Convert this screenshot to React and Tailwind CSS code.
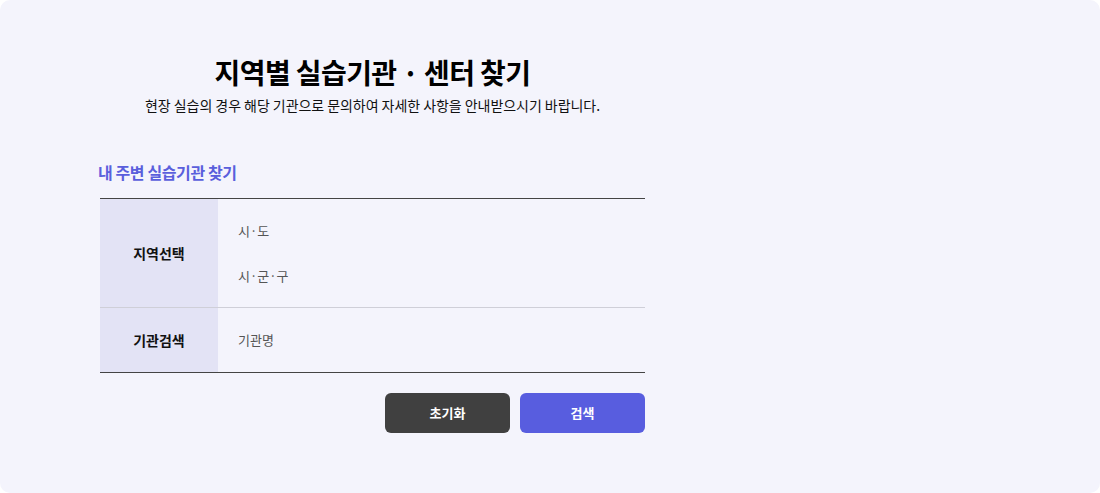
import React from 'react';

const font = { fontFamily: '"Noto Sans CJK KR", "Noto Sans", sans-serif' };

const App = () => {
  return (
    <div className="w-[1100px] h-[493px] bg-white" style={font}>
      <div className="w-full h-full bg-[#f4f4fc] rounded-[10px] pt-[52px] pl-[100px]">
        <div className="w-[545px]">
          {/* Title */}
          <div className="flex flex-col items-center">
            <h1 className="text-[28px] leading-[40px] font-bold text-black tracking-[-0.6px]">
              지역별 실습기관 · 센터 찾기
            </h1>
            <p className="text-[14px] leading-[20px] text-[#111] tracking-[-0.05px] mt-[3px] whitespace-nowrap">
              현장 실습의 경우 해당 기관으로 문의하여 자세한 사항을 안내받으시기 바랍니다.
            </p>
          </div>

          {/* Nearby search */}
          <h2 className="mt-[45px] -ml-[2px] text-[16px] leading-[24px] font-bold text-[#5a5fdc] tracking-[-0.4px]">
            내 주변 실습기관 찾기
          </h2>

          <div className="mt-[14px] border-t border-b border-[#444]">
            <div className="flex h-[109px] border-b border-[#cfcfd8]">
              <div className="w-[118px] bg-[#e3e3f5] flex items-center justify-center text-[14px] font-bold text-[#111]">
                지역선택
              </div>
              <div className="flex-1 flex flex-col justify-center gap-[25px] pl-[20px] text-[13px] leading-[20px] text-[#555]">
                <div>시·도</div>
                <div>시·군·구</div>
              </div>
            </div>
            <div className="flex h-[64px]">
              <div className="w-[118px] bg-[#e3e3f5] flex items-center justify-center text-[14px] font-bold text-[#111]">
                기관검색
              </div>
              <div className="flex-1 flex items-center pl-[20px] text-[13px] text-[#555]">
                기관명
              </div>
            </div>
          </div>

          {/* Buttons */}
          <div className="mt-[20px] flex justify-end gap-[10px]">
            <button className="w-[125px] h-[40px] rounded-[6px] bg-[#404040] text-white text-[13px] font-semibold">
              초기화
            </button>
            <button className="w-[125px] h-[40px] rounded-[6px] bg-[#585ddf] text-white text-[13px] font-semibold">
              검색
            </button>
          </div>
        </div>
      </div>
    </div>
  );
};

export default App;
